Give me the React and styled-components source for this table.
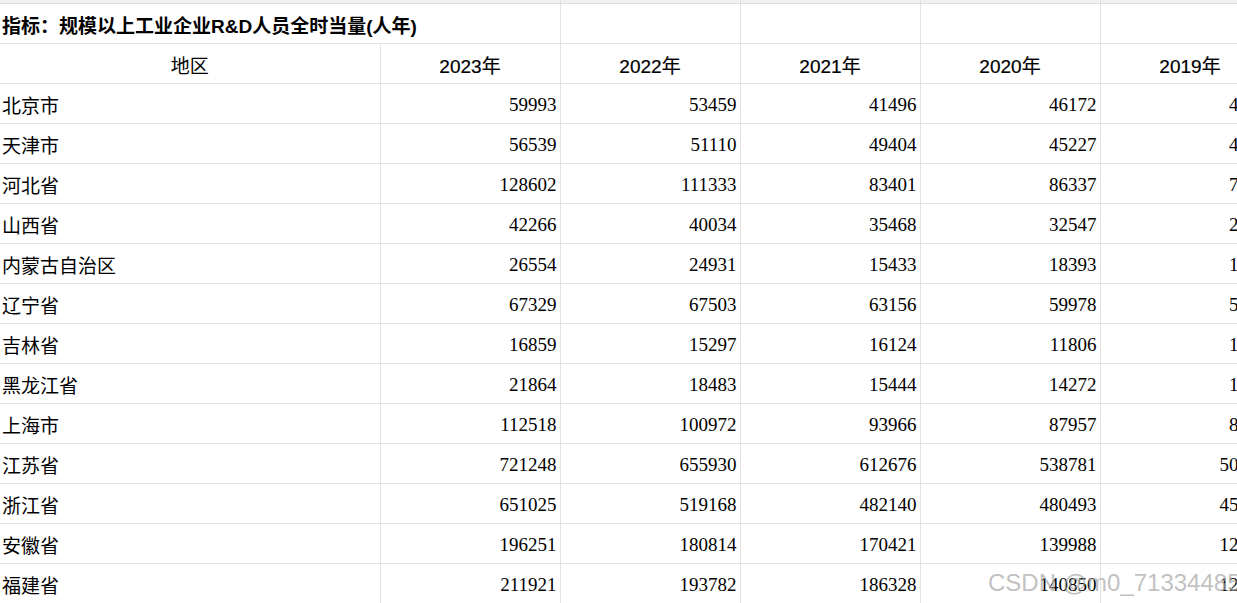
import React from "react";
import styled, { createGlobalStyle } from "styled-components";

const GlobalStyle = createGlobalStyle`
  html, body {
    margin: 0;
    padding: 0;
    overflow: hidden;
    background: #fff;
  }
`;

const Page = styled.div`
  position: relative;
  width: 1237px;
  height: 603px;
  overflow: hidden;
`;

const Sheet = styled.table`
  border-collapse: collapse;
  table-layout: fixed;
  width: 1280px;
  color: #000;

  tr > td:first-child {
    border-left: none;
  }
`;

const Strip = styled.td`
  height: 3px;
  padding: 0;
  background: #f1f1f1;
  border: 1px solid #dedede;
  border-top: none;
`;

const Cell = styled.td`
  height: 37px;
  padding: 2px ${(p) => (p.$align === "right" ? "3px" : "2px")} 0;
  border: 1px solid #e2e2e2;
  text-align: ${(p) => p.$align || "left"};
  white-space: nowrap;
  overflow: hidden;
  font-family: "Liberation Serif", "Noto Sans CJK SC", serif;
  font-size: 19px;
  vertical-align: middle;
`;

const TitleCell = styled(Cell)`
  font-family: "Liberation Sans", "Noto Sans CJK SC", sans-serif;
  font-weight: 700;
  font-size: 19px;
  overflow: visible;
`;

const YearCell = styled(Cell)`
  font-family: "Liberation Sans", "Noto Sans CJK SC", sans-serif;
  font-size: 19px;
  text-align: center;
  -webkit-text-stroke: 0.2px #000;
`;

const Watermark = styled.div`
  position: absolute;
  left: 988px;
  top: 569px;
  font-family: "Liberation Sans", "Noto Sans CJK SC", sans-serif;
  font-size: 24px;
  color: rgba(165, 165, 165, 0.7);
  white-space: nowrap;
  pointer-events: none;
`;

const years = ["2023年", "2022年", "2021年", "2020年", "2019年"];

const rows = [
  ["北京市", 59993, 53459, 41496, 46172, 43215],
  ["天津市", 56539, 51110, 49404, 45227, 41983],
  ["河北省", 128602, 111333, 83401, 86337, 78012],
  ["山西省", 42266, 40034, 35468, 32547, 29871],
  ["内蒙古自治区", 26554, 24931, 15433, 18393, 17024],
  ["辽宁省", 67329, 67503, 63156, 59978, 56310],
  ["吉林省", 16859, 15297, 16124, 11806, 12673],
  ["黑龙江省", 21864, 18483, 15444, 14272, 15906],
  ["上海市", 112518, 100972, 93966, 87957, 86452],
  ["江苏省", 721248, 655930, 612676, 538781, 506793],
  ["浙江省", 651025, 519168, 482140, 480493, 451877],
  ["安徽省", 196251, 180814, 170421, 139988, 121356],
  ["福建省", 211921, 193782, 186328, 140850, 129644],
];

export default function App() {
  return (
    <Page>
      <GlobalStyle />
      <Sheet>
        <colgroup>
          <col style={{ width: 380 }} />
          {years.map((y) => (
            <col key={y} style={{ width: 180 }} />
          ))}
        </colgroup>
        <tbody>
          <tr>
            <Strip colSpan={2} />
            {years.slice(1).map((y) => (
              <Strip key={y} />
            ))}
          </tr>
          <tr>
            <TitleCell colSpan={2}>指标：规模以上工业企业R&amp;D人员全时当量(人年)</TitleCell>
            {years.slice(1).map((y) => (
              <Cell key={y} />
            ))}
          </tr>
          <tr>
            <Cell $align="center">地区</Cell>
            {years.map((y) => (
              <YearCell key={y}>{y}</YearCell>
            ))}
          </tr>
          {rows.map(([name, ...vals]) => (
            <tr key={name}>
              <Cell>{name}</Cell>
              {vals.map((v, i) => (
                <Cell key={i} $align="right">
                  {v}
                </Cell>
              ))}
            </tr>
          ))}
        </tbody>
      </Sheet>
      <Watermark>CSDN @m0_71334485</Watermark>
    </Page>
  );
}
